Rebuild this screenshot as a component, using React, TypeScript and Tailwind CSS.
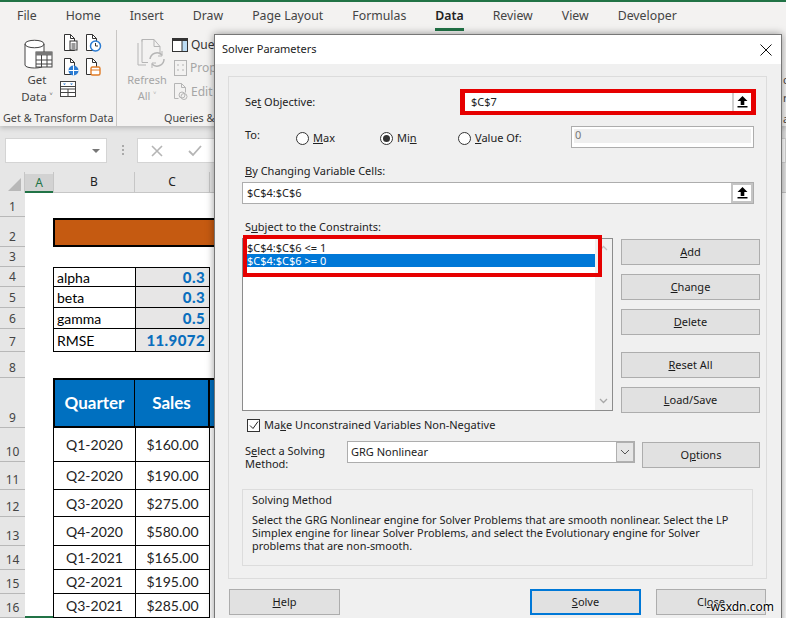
import React from "react";

const ui = "font-['Noto_Sans',sans-serif]";

function Doc({ children, color = "#333" }: { children?: React.ReactNode; color?: string }) {
  return (
    <svg width="18" height="18" viewBox="0 0 18 18" fill="none">
      <path d="M2.5 .5h6l4 4v12h-10z" fill="#fff" stroke={color} />
      <path d="M8.5 .5v4h4" stroke={color} />
      {children}
    </svg>
  );
}

function Upload() {
  return (
    <svg width="11" height="12" viewBox="0 0 11 12">
      <path d="M5.5 0L10.5 5H7.3V9H3.7V5H.5z" fill="#000" />
      <rect x="0.5" y="10" width="10" height="1.5" fill="#000" />
    </svg>
  );
}

function Btn({ children, className = "" }: { children: React.ReactNode; className?: string }) {
  return (
    <div className={`flex h-[26px] items-center justify-center border border-[#adadad] bg-[#e1e1e1] text-[11px] text-[#1a1a1a] ${className}`}>
      {children}
    </div>
  );
}

function Radio({ on, className = "" }: { on?: boolean; className?: string }) {
  return (
    <span className={`flex h-[13px] w-[13px] shrink-0 items-center justify-center rounded-full border border-[#333] bg-white ${className}`}>
      {on && <span className="h-[7px] w-[7px] rounded-full bg-[#333]" />}
    </span>
  );
}

function Ribbon() {
  return (
    <div className="relative z-10 h-[126px] border-t-2 border-[#217346] bg-[#f3f2f1] text-[#444] shadow-[0_2px_5px_rgba(0,0,0,0.2)]">
      <div className={`${ui} flex h-[28px] items-center gap-[29px] pl-[17px] text-[12.3px]`}>
        {["File", "Home", "Insert", "Draw", "Page Layout", "Formulas"].map((t) => (
          <span key={t}>{t}</span>
        ))}
        <span className="relative font-semibold text-[#222]">
          Data
          <span className="absolute -bottom-[6px] left-0 h-[3px] w-full bg-[#217346]" />
        </span>
        {["Review", "View", "Developer"].map((t) => (
          <span key={t}>{t}</span>
        ))}
      </div>
      <div className={`${ui} flex h-[96px]`}>
        <div className="flex w-[117px] flex-col border-r border-[#c8c6c4]">
          <div className="flex h-[78px]">
            <div className="flex w-[62px] flex-col items-center pl-[12px] pt-[9px] text-[11.5px] leading-[17px]">
              <svg width="30" height="30" viewBox="0 0 30 30" fill="none" className="mb-[2px] ml-[4px]">
                <path d="M1 5c0-5 19-5 19 0v21c0 4-19 4-19 0z" fill="#fff" stroke="#444" />
                <path d="M1 5c0 5 19 5 19 0" stroke="#444" />
                <rect x="12" y="13" width="16" height="15" fill="#fff" stroke="#444" />
                <rect x="12" y="13" width="16" height="3.5" fill="#777" />
                <path d="M12 21h16M12 25h16M17.5 16v12M23 16v12" stroke="#444" />
              </svg>
              <span>Get</span>
              <span>Data ˅</span>
            </div>
            <div className="flex flex-col pt-[4px]">
              <div className="flex gap-[4px]">
                <Doc>
                  <rect x="8" y="7" width="7" height="9" fill="#fff" stroke="#333" />
                  <path d="M9.5 10h4M9.5 12h4M9.5 14h4" stroke="#333" />
                </Doc>
                <Doc>
                  <circle cx="11.5" cy="12" r="5" fill="#fff" stroke="#2b7cd3" strokeWidth="1.5" />
                  <path d="M11.5 9v3h2.5" stroke="#333" />
                </Doc>
              </div>
              <div className="mt-[6px] flex gap-[4px]">
                <Doc>
                  <circle cx="11.5" cy="12.5" r="5" fill="#2b7cd3" />
                  <path d="M6.5 12.5h10M11.5 7.5v10" stroke="#fff" />
                </Doc>
                <Doc>
                  <rect x="7" y="9" width="9" height="8" rx="1.5" fill="#fff" stroke="#e07b25" strokeWidth="1.4" />
                  <path d="M7 12h9" stroke="#e07b25" />
                </Doc>
              </div>
              <svg width="16" height="16" viewBox="0 0 16 16" fill="none" className="-ml-[2px] mt-[5px]">
                <rect x=".5" y=".5" width="15" height="15" fill="#fff" stroke="#444" />
                <path d="M.5 5.5h15M.5 8h15M.5 11.5h15M8 8v7.5" stroke="#444" />
                <path d="M3 2.5h3L4.500 4zM10 2.500h3L11.500 4z" fill="#2b7cd3" />
              </svg>
            </div>
          </div>
          <div className="whitespace-nowrap pl-[3px] pt-[3px] text-[10.8px] leading-[16px] text-[#444]">Get &amp; Transform Data</div>
        </div>
        <div className="flex flex-1 flex-col">
          <div className="flex h-[78px]">
            <div className="flex w-[55px] flex-col items-center pl-[5px] pt-[9px] text-[11px] leading-[16px] text-[#a6a6a6]">
              <svg width="30" height="30" viewBox="0 0 30 30" fill="none" className="mb-[3px] ml-[8px]" stroke="#b5b5b5">
                <path d="M6 .5h12l6 7v8M6 .500v2M2 4v22h8" />
                <path d="M6 .5v23h6M18 .5v7h6" />
                <path d="M14 20a7 7 0 0 1 12-4M28 20a7 7 0 0 1-12 5" strokeWidth="1.5" />
                <path d="M26 12v5h-4M16 29v-5h4" />
              </svg>
              <span>Refresh</span>
              <span>All ˅</span>
            </div>
            <div className="flex flex-col gap-[7px] pt-[7px] text-[12px]">
              <div className="flex h-[15px] items-center gap-[3px] text-[#333]">
                <svg width="16" height="14" viewBox="0 0 16 14" fill="none">
                  <rect x=".5" y=".5" width="15" height="13" fill="#fff" stroke="#333" />
                  <rect x="1" y="1" width="14" height="2" fill="#333" />
                  <rect x="10" y="3" width="5" height="10" fill="#bcdcf4" />
                  <path d="M10 3v10" stroke="#333" />
                </svg>
                <span>Queries</span>
              </div>
              <div className="ml-[2px] flex h-[17px] items-center gap-[3px] text-[#a6a6a6]">
                <svg width="13" height="16" viewBox="0 0 13 16" fill="none" stroke="#b5b5b5">
                  <rect x=".5" y=".5" width="12" height="15" />
                  <path d="M3 5h2M3 10h2M8 5h2M8 10h2" />
                </svg>
                <span>Properties</span>
              </div>
              <div className="ml-[2px] flex h-[17px] items-center gap-[3px] text-[#a6a6a6]">
                <svg width="14" height="17" viewBox="0 0 14 17" fill="none" stroke="#b5b5b5">
                  <path d="M.5 .5h7l4 4v5M7.500 .5v4h4M.5 .5v15h4" />
                  <circle cx="8" cy="12" r="3" />
                  <circle cx="10" cy="13.500" r="3" />
                </svg>
                <span>Edit Links</span>
              </div>
            </div>
          </div>
          <div className="whitespace-nowrap pl-[47px] pt-[3px] text-[10.8px] leading-[16px] text-[#444]">Queries &amp; Connections</div>
        </div>
      </div>
      <span className={`${ui} absolute left-[783px] top-[71px] text-[11px] leading-[14px] text-[#444]`}>c</span>
      <span className={`${ui} absolute left-[783px] top-[89px] text-[11px] leading-[14px] text-[#444]`}>r</span>
      <span className={`${ui} absolute left-[783px] top-[110px] text-[11px] leading-[14px] text-[#444]`}>a</span>
    </div>
  );
}

function FormulaBar() {
  return (
    <div className="flex h-[46px] items-start bg-[#e6e6e6] pt-[12px]">
      <div className="ml-[5px] flex h-[25px] w-[102px] items-center justify-end border border-[#d4d4d4] bg-white pr-[6px]">
        <span className="h-0 w-0 border-x-[4px] border-t-[4px] border-x-transparent border-t-[#777]" />
      </div>
      <div className="ml-[15px] mt-[7px] flex flex-col gap-[2px]">
        <span className="h-[2px] w-[2px] bg-[#aaa]" />
        <span className="h-[2px] w-[2px] bg-[#aaa]" />
        <span className="h-[2px] w-[2px] bg-[#aaa]" />
      </div>
      <div className="ml-[13px] flex h-[25px] flex-1 items-center gap-[25px] border border-[#d4d4d4] bg-white pl-[13px]">
        <svg width="12" height="12" viewBox="0 0 12 12" stroke="#b5b5b5" strokeWidth="1.6">
          <path d="M1 1l10 10M11 1L1 11" />
        </svg>
        <svg width="14" height="12" viewBox="0 0 14 12" fill="none" stroke="#b5b5b5" strokeWidth="1.8">
          <path d="M1 6l4 4 8-9" />
        </svg>
      </div>
    </div>
  );
}

const sheetFont = "font-['Lato',sans-serif]";

const rows = [
  { n: 1, h: 24 }, { n: 2, h: 30 }, { n: 3, h: 20 }, { n: 4, h: 20 }, { n: 5, h: 21 }, { n: 6, h: 21 },
  { n: 7, h: 23 }, { n: 8, h: 26 }, { n: 9, h: 50 }, { n: 10, h: 34 }, { n: 11, h: 28 }, { n: 12, h: 27 },
  { n: 13, h: 29 }, { n: 14, h: 24 }, { n: 15, h: 24 }, { n: 16, h: 24 },
];
const params: Record<number, [string, string]> = {
  4: ["alpha", "0.3"], 5: ["beta", "0.3"], 6: ["gamma", "0.5"], 7: ["RMSE", "11.9072"],
};
const data: Record<number, [string, string]> = {
  10: ["Q1-2020", "$160.00"], 11: ["Q2-2020", "$190.00"], 12: ["Q3-2020", "$275.00"], 13: ["Q4-2020", "$580.00"],
  14: ["Q1-2021", "$165.00"], 15: ["Q2-2021", "$195.00"], 16: ["Q3-2021", "$285.00"],
};

function Cells({ n }: { n: number }) {
  if (n === 2) {
    return <div className="mt-[1px] h-[29px] w-[400px] border-2 border-black bg-[#c55a11]" />;
  }
  if (params[n]) {
    return (
      <>
        <div className={`flex w-[82px] items-center border-b border-l border-black pl-[3px] text-[14px] text-black ${n === 4 ? "border-t" : ""}`}>
          {params[n][0]}
        </div>
        <div className={`flex w-[75px] items-center justify-end border-x border-b border-black bg-[#e7e6e6] pr-[4px] text-[15px] font-black tracking-[0.4px] text-[#0a6ebd] ${n === 4 ? "border-t" : ""}`}>
          {params[n][1]}
        </div>
      </>
    );
  }
  if (n === 9) {
    return (
      <>
        <div className="flex w-[82px] items-center justify-center border-2 border-r border-black bg-[#0070c0] text-[17px] font-bold text-white">Quarter</div>
        <div className="flex w-[75px] items-center justify-center border-y-2 border-r-2 border-black bg-[#0070c0] text-[17px] font-bold text-white">Sales</div>
        <div className="w-[100px] border-y-2 border-black bg-[#0070c0]" />
      </>
    );
  }
  if (data[n]) {
    return (
      <>
        <div className="flex w-[82px] items-center justify-center border-b border-l border-black text-[14px] text-[#222]">{data[n][0]}</div>
        <div className="flex w-[75px] items-center justify-center border-x border-b border-black text-[14px] text-[#222]">{data[n][1]}</div>
      </>
    );
  }
  return null;
}

function Sheet() {
  return (
    <div className={`${sheetFont} flex-1 bg-white`}>
      <div className={`flex h-[21px] bg-[#e6e6e6] text-[12px] ${ui}`}>
        <div className="flex w-[25px] items-end justify-end border-r border-[#c6c6c6] pb-[2px] pr-[3px]">
          <span className="h-0 w-0 border-b-[13px] border-l-[13px] border-b-[#b8b8b8] border-l-transparent" />
        </div>
        <div className="mt-[2px] flex w-[28px] items-center justify-center border-b-2 border-[#217346] bg-[#d2d2d2] text-[#217346]">A</div>
        <div className="flex w-[82px] items-center justify-center border-x border-b border-[#c6c6c6] text-[#222]">B</div>
        <div className="flex w-[75px] items-center justify-center border-r border-b border-[#c6c6c6] text-[#222]">C</div>
        <div className="flex-1 border-b border-[#c6c6c6]" />
      </div>
      {rows.map((r) => (
        <div key={r.n} className="flex" style={{ height: r.h }}>
          <div className={`${ui} flex w-[25px] shrink-0 items-end justify-center border-b border-[#b8b8b8] bg-[#e6e6e6] pb-[1px] text-[12px] leading-[16px] text-[#444]`}>
            {r.n}
          </div>
          <div className={`w-[28px] shrink-0 ${r.n === 16 ? "border-b-2 border-[#217346]" : ""}`} />
          <Cells n={r.n} />
        </div>
      ))}
    </div>
  );
}

function Dialog() {
  const actions: [string, string][] = [
    ["A", "dd"], ["C", "hange"], ["D", "elete"], ["R", "eset All"], ["L", "oad/Save"],
  ];
  return (
    <div className={`${ui} absolute left-[214px] top-[34px] z-20 h-[600px] w-[568px] border border-[#777] bg-[#f0f0f0] text-[11px] text-[#222] shadow-[0_0_8px_rgba(0,0,0,0.4)]`}>
      <div className="flex h-[29px] items-center justify-between bg-white pl-[7px] pr-[9px]">
        <span>Solver Parameters</span>
        <svg width="12" height="12" viewBox="0 0 12 12" stroke="#111" strokeWidth="1">
          <path d="M.5 .5l11 11M11.500 .5l-11 11" />
        </svg>
      </div>

      <div className="relative ml-[13px] mt-[12px] h-[503px] w-[539px] border border-[#dcdcdc] pl-[13px]">
        <div className="mt-[12px] flex h-[26px] items-center">
          <span className="pl-[3px]">Se<u>t</u> Objective:</span>
          <div className="ml-auto mr-[10px] flex h-[26px] w-[296px] border-x-[5px] border-y-[4px] border-[#e60000] bg-white pl-[6px]">
            <span className="flex-1 leading-[17px]">$C$7</span>
            <span className="flex w-[19px] items-center justify-center border-l-2 border-[#d0d0d0] bg-white"><Upload /></span>
          </div>
        </div>
        <div className="mt-[11px] flex h-[22px]">
          <span className="w-[54px] pl-[3px] pt-[1px]">To:</span>
          <div className="flex w-[84px] items-center gap-[4px] pt-[3px]"><Radio /><span><u>M</u>ax</span></div>
          <div className="flex w-[78px] items-center gap-[4px] pt-[3px]"><Radio on /><span>Mi<u>n</u></span></div>
          <div className="flex w-[113px] items-center gap-[4px] pt-[3px]"><Radio /><span><u>V</u>alue Of:</span></div>
          <div className="flex w-[183px] items-start border border-[#adadad] bg-white p-[2px] text-[#777]">
            <span className="h-[14px] flex-1 bg-[#efefef] pl-[1px] leading-[12px]">0</span>
          </div>
        </div>
        <div className="mt-[15px] h-[16px] pl-[3px] leading-[16px]"><u>B</u>y Changing Variable Cells:</div>
        <div className="mt-[3px] flex h-[22px] w-[512px] border border-[#adadad] bg-white pl-[4px]">
          <span className="flex-1 leading-[19px]">$C$4:$C$6</span>
          <span className="flex w-[22px] items-center justify-center border-2 border-[#c4c4c4] bg-white"><Upload /></span>
        </div>
        <div className="mt-[15px] h-[16px] pl-[3px] leading-[16px]">S<u>u</u>bject to the Constraints:</div>
        <div className="mt-[3px] flex">
          <div className="relative flex h-[173px] w-[371px] border border-[#8c8c8c] bg-white">
            <div className="flex-1 pl-[3px] pt-[2px] leading-[13px]">
              <div className="h-[13px] pl-[1px]">$C$4:$C$6 &lt;= 1</div>
              <div className="h-[13px] bg-[#0078d7] pl-[1px] text-white">$C$4:$C$6 &gt;= 0</div>
            </div>
            <div className="flex w-[17px] flex-col items-center justify-between bg-[#f0f0f0] py-[6px] text-[#b5b5b5]">
              <svg width="9" height="6" viewBox="0 0 9 6" fill="none" stroke="#c0c0c0" strokeWidth="1.3"><path d="M1 5l3.500-3.500L8 5" /></svg>
              <svg width="9" height="6" viewBox="0 0 9 6" fill="none" stroke="#a8a8a8" strokeWidth="1.3"><path d="M1 1l3.500 3.500L8 1" /></svg>
            </div>
            <div className="absolute -top-[4px] left-[0px] h-[42px] w-[359px] border-4 border-[#e60000]" />
          </div>
          <div className="ml-[8px] flex w-[139px] flex-col pt-[1px]">
            {actions.map(([k, rest], i) => (
              <Btn key={k} className={i === 0 ? "" : i === 3 ? "mt-[17px]" : "mt-[9px]"}><span><u>{k}</u>{rest}</span></Btn>
            ))}
          </div>
        </div>
        <div className="mt-[5px] flex h-[14px] items-center pl-[5px]">
          <span className="flex h-[13px] w-[13px] items-center justify-center border border-[#333] bg-white">
            <svg width="10" height="9" viewBox="0 0 10 9" fill="none" stroke="#222"><path d="M1 4.500l3 3 5-7" /></svg>
          </span>
          <span className="ml-[4px]">Ma<u>k</u>e Unconstrained Variables Non-Negative</span>
        </div>
        <div className="mt-[9px] flex h-[28px] items-start">
          <div className="w-[105px] pl-[3px] pt-[3px] leading-[13px]">S<u>e</u>lect a Solving<br />Method:</div>
          <div className="flex h-[22px] w-[288px] border border-[#adadad] bg-white pl-[3px]">
            <span className="flex-1 leading-[20px]">GRG Nonlinear</span>
            <span className="flex w-[18px] items-center justify-center border border-[#b0b0b0] bg-[#e6e6e6]">
              <svg width="10" height="6" viewBox="0 0 10 6" fill="none" stroke="#555"><path d="M1 1l4 4 4-4" /></svg>
            </span>
          </div>
          <Btn className="ml-[7px] mt-[1px] w-[118px]"><span>O<u>p</u>tions</span></Btn>
        </div>
        <div className="mt-[20px] h-[77px] w-[511px] whitespace-nowrap border border-[#dcdcdc] pl-[9px] pt-[2px] text-[10.9px] leading-[13px]">
          <div className="h-[21px] leading-[16px]">Solving Method</div>
          <div>Select the GRG Nonlinear engine for Solver Problems that are smooth nonlinear. Select the LP<br />Simplex engine for linear Solver Problems, and select the Evolutionary engine for Solver<br />problems that are non-smooth.</div>
        </div>
      </div>

      <div className="ml-[14px] mt-[10px] flex w-[537px]">
        <Btn className="w-[111px]"><span><u>H</u>elp</span></Btn>
        <Btn className="ml-auto w-[111px] !border-2 !border-[#0078d7]"><span><u>S</u>olve</span></Btn>
        <Btn className="ml-[15px] w-[110px]"><span>Cl<u>o</u>se</span></Btn>
      </div>
    </div>
  );
}

export default function App() {
  return (
    <div className="relative flex h-[618px] w-[786px] flex-col overflow-hidden bg-white">
      <Ribbon />
      <FormulaBar />
      <Sheet />
      <Dialog />
      <span className={`${ui} absolute right-[12px] top-[599px] z-30 text-[12px] leading-[16px] text-black [text-shadow:0_0_2px_#fff,0_0_2px_#fff,0_0_3px_#fff]`}>wsxdn.com</span>
    </div>
  );
}
